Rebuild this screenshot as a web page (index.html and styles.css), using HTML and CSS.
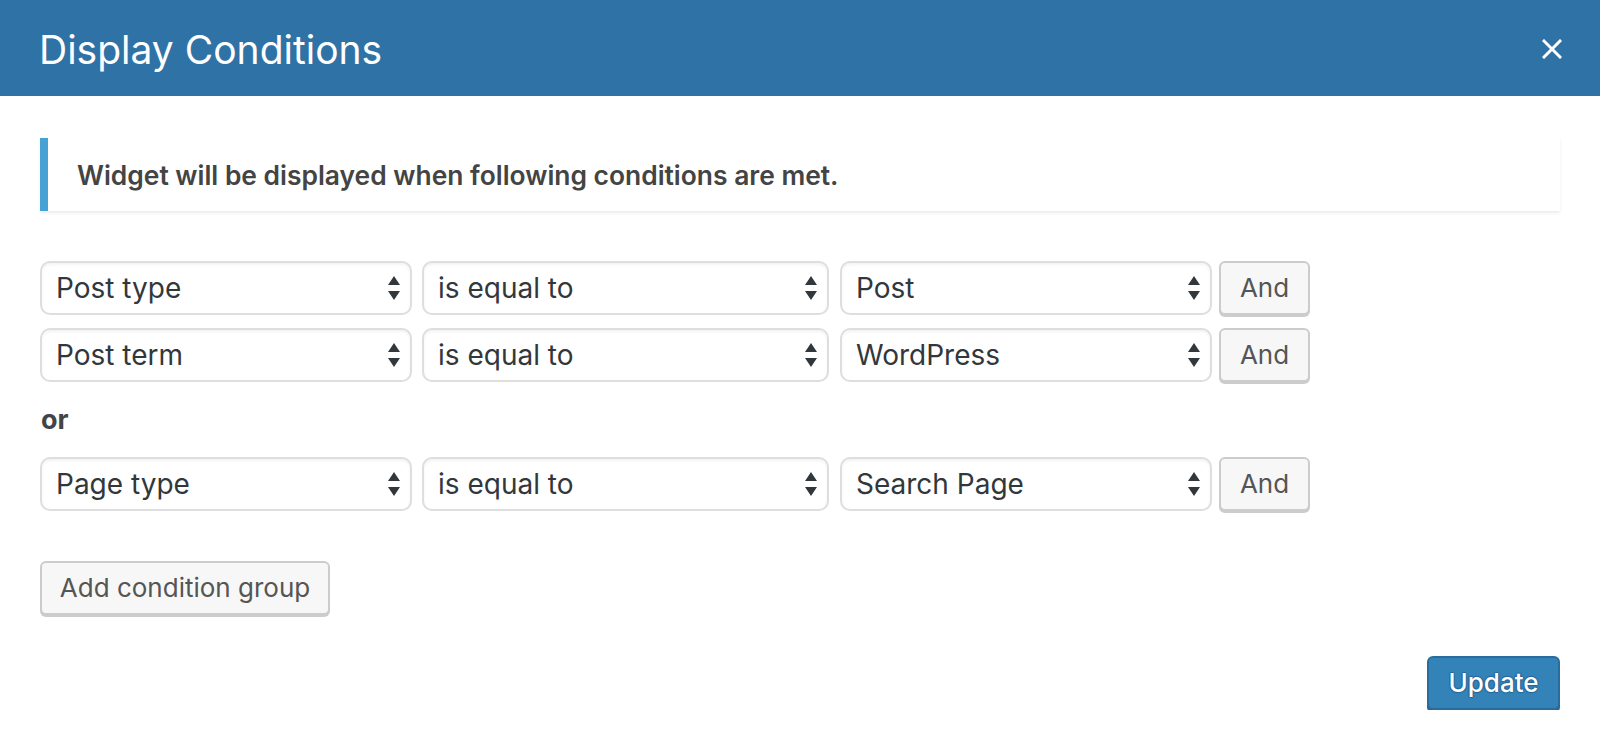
FILE: index.html
```html
<!DOCTYPE html>
<html lang="en">
<head>
<meta charset="utf-8">
<title>Display Conditions</title>
<link rel="stylesheet" href="styles.css">
</head>
<body>
<div class="modal">
  <header class="modal-header">
    <h1 class="modal-title">Display Conditions</h1>
    <button class="close-btn" aria-label="Close">
      <svg width="20" height="20" viewBox="0 0 20 20"><path d="M2 2L18 18M18 2L2 18" stroke="#fff" stroke-width="3" stroke-linecap="square"/></svg>
    </button>
  </header>
  <main class="modal-body">
    <div class="notice"><p>Widget will be displayed when following conditions are met.</p></div>

    <div class="group group-first">
      <div class="cond-row">
        <div class="select sel-a"><span>Post type</span><svg class="arrows" width="12" height="24" viewBox="0 0 12 24"><path d="M0 9L6 0L12 9Z M0 15L12 15L6 24Z"/></svg></div>
        <div class="select sel-b"><span>is equal to</span><svg class="arrows" width="12" height="24" viewBox="0 0 12 24"><path d="M0 9L6 0L12 9Z M0 15L12 15L6 24Z"/></svg></div>
        <div class="select sel-c"><span>Post</span><svg class="arrows" width="12" height="24" viewBox="0 0 12 24"><path d="M0 9L6 0L12 9Z M0 15L12 15L6 24Z"/></svg></div>
        <button class="btn btn-and">And</button>
      </div>
      <div class="cond-row">
        <div class="select sel-a"><span>Post term</span><svg class="arrows" width="12" height="24" viewBox="0 0 12 24"><path d="M0 9L6 0L12 9Z M0 15L12 15L6 24Z"/></svg></div>
        <div class="select sel-b"><span>is equal to</span><svg class="arrows" width="12" height="24" viewBox="0 0 12 24"><path d="M0 9L6 0L12 9Z M0 15L12 15L6 24Z"/></svg></div>
        <div class="select sel-c"><span>WordPress</span><svg class="arrows" width="12" height="24" viewBox="0 0 12 24"><path d="M0 9L6 0L12 9Z M0 15L12 15L6 24Z"/></svg></div>
        <button class="btn btn-and">And</button>
      </div>
    </div>

    <div class="or">or</div>

    <div class="group">
      <div class="cond-row">
        <div class="select sel-a"><span>Page type</span><svg class="arrows" width="12" height="24" viewBox="0 0 12 24"><path d="M0 9L6 0L12 9Z M0 15L12 15L6 24Z"/></svg></div>
        <div class="select sel-b"><span>is equal to</span><svg class="arrows" width="12" height="24" viewBox="0 0 12 24"><path d="M0 9L6 0L12 9Z M0 15L12 15L6 24Z"/></svg></div>
        <div class="select sel-c"><span>Search Page</span><svg class="arrows" width="12" height="24" viewBox="0 0 12 24"><path d="M0 9L6 0L12 9Z M0 15L12 15L6 24Z"/></svg></div>
        <button class="btn btn-and">And</button>
      </div>
    </div>

    <button class="btn btn-add">Add condition group</button>

    <div class="footer">
      <button class="btn btn-primary">Update</button>
    </div>
  </main>
</div>
</body>
</html>
```

FILE: styles.css
```css
html, body {
  margin: 0;
  padding: 0;
  background: #fff;
}

body {
  font-family: Inter, "Liberation Sans", Arial, sans-serif;
  color: #32373c;
}

.modal-header {
  height: 96px;
  background: #2f72a6;
  display: flex;
  align-items: center;
  justify-content: space-between;
  padding: 2px 38px 0 39px;
  box-sizing: border-box;
}

.modal-title {
  margin: 0;
  color: #fff;
  font-weight: 400;
  font-size: 39px;
  line-height: 1;
  letter-spacing: 0;
}

.close-btn {
  background: none;
  border: 0;
  padding: 0;
  width: 20px;
  height: 20px;
  display: flex;
  cursor: pointer;
}

.modal-body {
  padding: 42px 40px 0 40px;
}

.notice {
  height: 73px;
  box-sizing: border-box;
  border-left: 8px solid #46a2d4;
  background: #fff;
  box-shadow: 0 2px 3px rgba(0, 0, 0, 0.08);
  display: flex;
  align-items: center;
  padding-left: 29px;
}

.notice p {
  margin: 0;
  font-size: 26.4px;
  font-weight: 600;
  color: #444;
}

.group {
  display: flex;
  flex-direction: column;
  gap: 13px;
}

.group-first {
  margin-top: 50px;
}

.cond-row {
  display: flex;
  align-items: flex-start;
}

.select {
  height: 54px;
  box-sizing: border-box;
  border: 2px solid #dedede;
  border-radius: 10px;
  background: #fff;
  box-shadow: inset 0 2px 3px rgba(0, 0, 0, 0.05);
  display: flex;
  align-items: center;
  justify-content: space-between;
  padding: 0 10px 0 14px;
  font-size: 28px;
  color: #32373c;
}

.arrows {
  fill: #32373c;
  flex: none;
}

.sel-a { width: 372px; margin-right: 10px; }
.sel-b { width: 407px; margin-right: 11px; }
.sel-c { width: 372px; margin-right: 7px; }

.btn {
  font-family: inherit;
  font-size: 26px;
  line-height: 1;
  color: #555;
  background: #f7f7f7;
  border: 2px solid #ccc;
  border-radius: 6px;
  box-shadow: 0 2px 0 #ccc;
  height: 54px;
  padding: 0 21px;
  cursor: pointer;
  box-sizing: border-box;
}

.btn-and {
  width: 91px;
  padding: 0;
}

.or {
  font-size: 27px;
  font-weight: 700;
  color: #444;
  line-height: 34px;
  margin: 21px 0 20px 1px;
}

.btn-add {
  margin-top: 50px;
  width: 290px;
  padding: 0;
}

.footer {
  display: flex;
  justify-content: flex-end;
  margin-top: 41px;
}

.btn-primary {
  background: #3383b9;
  border-color: #2a6c9e;
  box-shadow: 0 3px 0 #2a6696;
  color: #fff;
  font-weight: 500;
  width: 133px;
  padding: 0;
  text-shadow: 0 -1px 1px #256594, 1px 0 1px #256594, 0 1px 1px #256594, -1px 0 1px #256594;
}
```
